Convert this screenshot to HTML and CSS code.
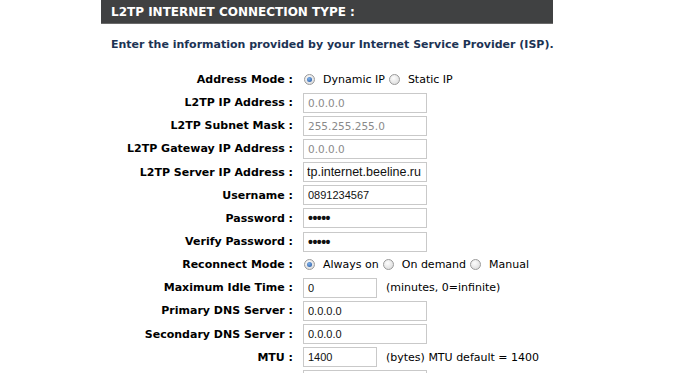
FILE: index.html
```html
<!DOCTYPE html>
<html lang="en">
<head>
    <meta charset="UTF-8">
    <title>L2TP Internet Connection Type</title>
    <link rel="stylesheet" href="styles.css">
</head>
<body>
    <div class="box">
        <div class="box-title">L2TP INTERNET CONNECTION TYPE :</div>
        <p class="intro">Enter the information provided by your Internet Service Provider (ISP).</p>
        <div class="form">
            <label>Address Mode :</label>
            <div class="field">
                <input type="radio" name="mode" checked> <span>Dynamic IP</span>
                <input type="radio" name="mode"> <span>Static IP</span>
            </div>

            <label>L2TP IP Address :</label>
            <div class="field"><input class="text off" type="text" value="0.0.0.0"></div>

            <label>L2TP Subnet Mask :</label>
            <div class="field"><input class="text off" type="text" value="255.255.255.0"></div>

            <label>L2TP Gateway IP Address :</label>
            <div class="field"><input class="text off" type="text" value="0.0.0.0"></div>

            <label>L2TP Server IP Address :</label>
            <div class="field"><input class="text big" type="text" value="tp.internet.beeline.ru"></div>

            <label>Username :</label>
            <div class="field"><input class="text" type="text" value="0891234567"></div>

            <label>Password :</label>
            <div class="field"><input class="text pass" type="password" value="12345"></div>

            <label>Verify Password :</label>
            <div class="field"><input class="text pass" type="password" value="12345"></div>

            <label>Reconnect Mode :</label>
            <div class="field">
                <input type="radio" name="rec" checked> <span>Always on</span>
                <input type="radio" name="rec"> <span>On demand</span>
                <input type="radio" name="rec"> <span>Manual</span>
            </div>

            <label>Maximum Idle Time :</label>
            <div class="field"><input class="text short" type="text" value="0"> <span class="note">(minutes, 0=infinite)</span></div>

            <label>Primary DNS Server :</label>
            <div class="field"><input class="text" type="text" value="0.0.0.0"></div>

            <label>Secondary DNS Server :</label>
            <div class="field"><input class="text" type="text" value="0.0.0.0"></div>

            <label>MTU :</label>
            <div class="field"><input class="text short" type="text" value="1400"> <span class="note">(bytes) MTU default = 1400</span></div>

            <label></label>
            <div class="field"><input class="text" type="text" value=""></div>
        </div>
    </div>
</body>
</html>
```

FILE: styles.css
```css
* {
    margin: 0;
    padding: 0;
    box-sizing: border-box;
}

body {
    background: #fff;
    font-family: 'DejaVu Sans', Verdana, sans-serif;
    font-size: 11px;
    color: #000;
    height: 373px;
    overflow: hidden;
}

.box {
    width: 452px;
    margin-left: 101px;
}

.box-title {
    height: 24px;
    background: #404142;
    border-bottom: 1px solid #6a6a6a;
    color: #fff;
    font-weight: bold;
    font-size: 12px;
    padding: 5px 0 0 10px;
}

.intro {
    color: #1c3354;
    font-weight: bold;
    font-size: 11px;
    white-space: nowrap;
    padding: 14px 0 0 10px;
    height: 57px;
}

.form {
    display: grid;
    grid-template-columns: 192px 1fr;
    grid-auto-rows: 23.15px;
    column-gap: 10px;
    margin-top: -13px;
}

.form label {
    font-weight: bold;
    font-size: 11px;
    text-align: right;
    align-self: center;
    white-space: nowrap;
}

.field {
    display: flex;
    align-items: center;
    white-space: nowrap;
}

.field span {
    margin-right: 3px;
}

.field .note {
    margin-left: 9px;
}

.field input[type="radio"] {
    appearance: none;
    width: 11px;
    height: 11px;
    border-radius: 50%;
    border: 1px solid #9a9a9a;
    background: radial-gradient(circle at 40% 35%, #fdfdfd, #d6d6d6);
    margin: 0 8px 0 1px;
    position: relative;
}

.field input[type="radio"]:checked::after {
    content: '';
    position: absolute;
    left: 2px;
    top: 2px;
    width: 5px;
    height: 5px;
    border-radius: 50%;
    background: radial-gradient(circle at 40% 35%, #7fb2ea, #1d4f9c);
}

.text {
    width: 124px;
    height: 20px;
    border: 1px solid #c9c9c9;
    padding: 0 4px;
    font-family: 'Liberation Sans', Arial, sans-serif;
    font-size: 11px;
    color: #111;
    outline: none;
}

.text.off {
    color: #8a8a8a;
    font-family: 'DejaVu Sans', Verdana, sans-serif;
    font-size: 10.5px;
}

.text.big {
    font-size: 12.5px;
    padding: 0 3px;
}

.text.pass {
    font-size: 14px;
    letter-spacing: -0.5px;
    font-weight: bold;
}

.text.short {
    width: 74px;
}
```
